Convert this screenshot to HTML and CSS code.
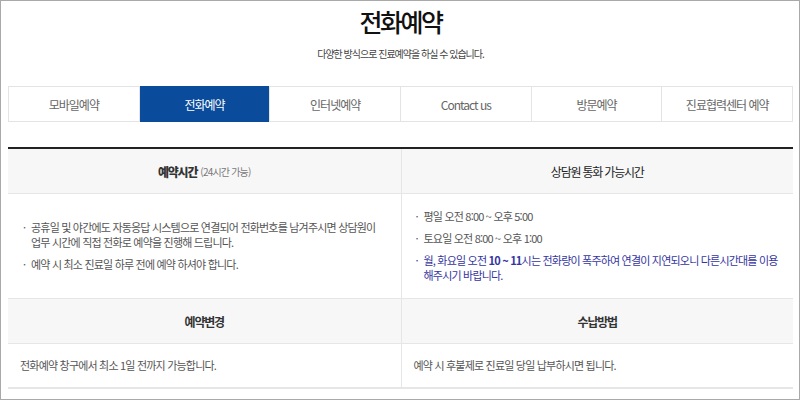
FILE: index.html
```html
<!DOCTYPE html>
<html lang="ko">

<head>
    <meta charset="UTF-8">
    <meta name="viewport" content="width=device-width, initial-scale=1.0">
    <title>전화예약</title>

    <link rel="stylesheet" href="styles.css">
</head>

<body>
    <div class="frame">
        <header class="page-head">
            <h1>전화예약</h1>
            <p class="lead">다양한 방식으로 진료예약을 하실 수 있습니다.</p>
        </header>

        <nav class="tabs">
            <a href="#" class="tab">모바일예약</a>
            <a href="#" class="tab active">전화예약</a>
            <a href="#" class="tab">인터넷예약</a>
            <a href="#" class="tab">Contact us</a>
            <a href="#" class="tab">방문예약</a>
            <a href="#" class="tab">진료협력센터 예약</a>
        </nav>

        <section class="info">
            <div class="cell head">
                <strong>예약시간</strong> <span class="note">(24시간 가능)</span>
            </div>
            <div class="cell head right light">상담원 통화 가능시간</div>

            <div class="cell body">
                <ul class="dots">
                    <li>공휴일 및 야간에도 자동응답 시스템으로 연결되어 전화번호를 남겨주시면 상담원이<br>업무 시간에 직접 전화로 예약을 진행해 드립니다.</li>
                    <li>예약 시 최소 진료일 하루 전에 예약 하셔야 합니다.</li>
                </ul>
            </div>
            <div class="cell body right">
                <ul class="dots">
                    <li>평일 오전 8:00 ~ 오후 5:00</li>
                    <li>토요일 오전 8:00 ~ 오후 1:00</li>
                    <li class="alert">월, 화요일 오전 <b>10 ~ 11</b>시는 전화량이 폭주하여 연결이 지연되오니 다른시간대를 이용<br>해주시기 바랍니다.</li>
                </ul>
            </div>

            <div class="cell head">예약변경</div>
            <div class="cell head right">수납방법</div>

            <div class="cell body short">전화예약 창구에서 최소 1일 전까지 가능합니다.</div>
            <div class="cell body short right">예약 시 후불제로 진료일 당일 납부하시면 됩니다.</div>
        </section>
    </div>
</body>

</html>
```

FILE: styles.css
```css
* {
    box-sizing: border-box;
    margin: 0;
    padding: 0;
}

body {
    background: #fff;
    font-family: "Noto Sans CJK KR", "Noto Sans", sans-serif;
    color: #555;
}

.frame {
    height: 400px;
    border: 1px solid #a9a9a9;
    padding: 0 6px 0 7px;
    overflow: hidden;
}

.page-head {
    text-align: center;
}

h1 {
    font-size: 25px;
    line-height: 40px;
    font-weight: 500;
    letter-spacing: -2.5px;
    color: #111;
}

.lead {
    margin-top: 3px;
    font-size: 10px;
    line-height: 20px;
    letter-spacing: -1px;
    color: #444;
}

.tabs {
    display: flex;
    height: 36px;
    margin-top: 22px;
    border: 1px solid #e4e4e4;
}

.tab {
    flex: 1;
    display: flex;
    justify-content: center;
    align-items: center;
    border-left: 1px solid #e4e4e4;
    font-size: 12px;
    letter-spacing: -1px;
    color: #666;
    text-decoration: none;
}

.tab:first-child {
    border-left: none;
}

.tab.active {
    background: #0a4c9b;
    color: #fff;
    margin: -1px 0;
}

.info {
    display: grid;
    grid-template-columns: 1fr 1fr;
    margin-top: 25px;
    border-top: 2px solid #222;
    border-bottom: 2px solid #e6e6e6;
}

.cell.right {
    border-left: 1px solid #e6e6e6;
}

.head {
    height: 45px;
    display: flex;
    justify-content: center;
    align-items: center;
    background: #f7f7f7;
    border-bottom: 1px solid #e6e6e6;
    font-size: 12px;
    font-weight: bold;
    letter-spacing: -1.2px;
    color: #333;
}

.head.light {
    font-weight: normal;
    color: #222;
}

.head strong {
    margin-right: 3px;
}

.head .note {
    font-size: 10px;
    font-weight: normal;
    color: #777;
    letter-spacing: -0.8px;
}

.body {
    display: flex;
    flex-direction: column;
    justify-content: center;
    padding: 15px 4px 15px 15px;
    font-size: 11px;
    line-height: 15px;
    letter-spacing: -0.8px;
    border-bottom: 1px solid #e6e6e6;
}

.body.right {
    padding-left: 14px;
}

.body.short {
    height: 43px;
    padding: 0 10px 0 12px;
    border-bottom: none;
}

.dots {
    list-style: none;
    display: flex;
    flex-direction: column;
    gap: 7px;
}

.dots li {
    padding-left: 8px;
    text-indent: -8px;
}

.dots li::before {
    content: "·";
    display: inline-block;
    width: 8px;
    text-indent: 0;
}

.dots .alert {
    color: #3535a0;
}

.dots .alert b {
    font-weight: bold;
}
```
